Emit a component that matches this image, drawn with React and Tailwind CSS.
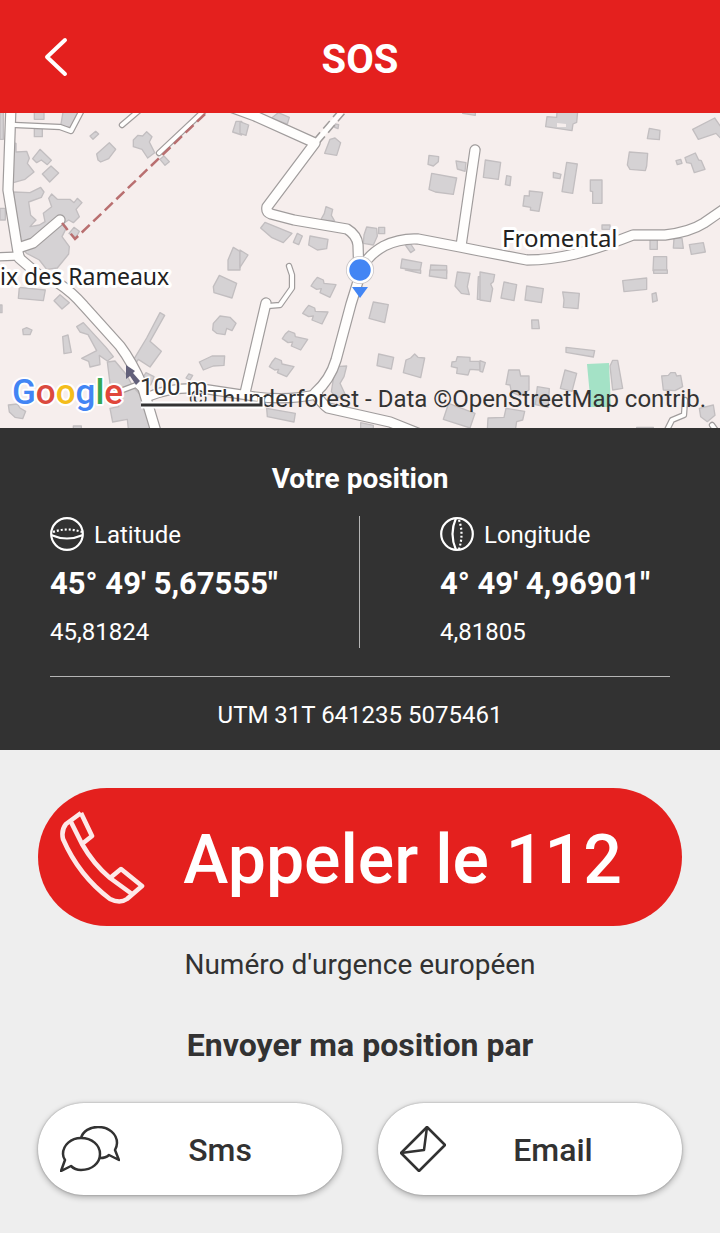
const roads = [
  { w: 9, d: 'M11 105 L8 190 L17 246 L19 258 L40 276 L58 283 Q72 292 84 306 L120 346 Q132 362 142 385 L157 435' },
  { w: 9, d: 'M60 220 L33 243 L18 248' },
  { w: 7, d: 'M-5 257 L20 256' },
  { w: 4, d: 'M15 125 L60 127 L71 131 L82 110' },
  { w: 4, d: 'M122 125 L142 108' },
  { w: 4, d: 'M159 153 L207 108' },
  { w: 9, d: 'M225 105 L255 116 L315 143 L267 207 Q266 212 271 214 L294 220 L347 229 Q357 235 358 245 L359 275' },
  { w: 9, d: 'M360 272 Q366 256 384 246 Q400 238 418 239 L460 247 L480 251 L527 260 Q550 260 575 254 Q600 248 633 235 L665 235 Q690 232 704 223 L730 205' },
  { w: 9, d: 'M475 150 L461 246' },
  { w: 9, d: 'M360 275 L351 304 L336 360 Q330 380 315 393 Q322 404 328 408 L390 422 L425 436' },
  { w: 9, d: 'M266 303 L245 393' },
  { w: 4, d: 'M268 306 L280 305 L292 288 L292 275 L289 266' },
  { w: 8, d: 'M150 396 Q175 386 205 389 L245 395 Q285 402 318 394' },
  { w: 4, d: 'M115 393 L136 385 L150 398' },
  { w: 4, d: 'M685 400 L684 415 L672 420 L666 432' },
  { w: 4, d: 'M712 425 L720 436' },
];

// building outlines, drawn per tile at three times the map scale
const tiles = [
  { x: 0, y: 110, d: [
    'M0 0H10V88H0Z', 'M103 0H132V28H103Z', 'M103 55H127V80H103Z', 'M190 0H234V22L210 52L182 48Z',
    'M270 78L287 64L296 72L279 88Z', 'M290 132L328 98L347 118L326 146L302 156L294 150Z',
    'M400 90L414 76L428 78L440 65L456 80L448 96L464 128L443 144L426 118L400 110Z',
    'M480 148L492 138L508 155L495 166Z', 'M98 146L120 118L154 151L142 164L124 150L110 158Z',
    'M127 192L153 168L176 189L149 216Z', 'M48 100V126L80 124L88 145L82 160L102 186L75 208L40 218V98Z',
    'M40 246L90 248L122 232L132 246L124 262L86 276L92 316L108 330L90 350L118 345L135 335L130 310L155 290L146 265L155 252L172 268L210 268L222 278L232 265L246 278L228 298L238 320L220 338L206 330L190 340L200 352L186 380L208 410L206 432L172 474L140 478L118 450L80 430L68 420L60 380Z',
    'M207 370L222 352L238 364L228 382Z', 'M0 295H16V330H0Z', 'M684 450L700 412L720 424V480H684Z', 'M708 34H725V75L698 66Z',
  ] },
  { x: 240, y: 110, d: [
    'M0 35L26 45L18 76L0 70Z', 'M95 24L115 8L148 22L142 42Z', 'M254 130L270 88L285 84L302 98L290 136Z',
    'M285 42L296 44L294 56L284 52Z', 'M567 136L596 140L595 155L580 168L564 163Z', 'M648 153L678 158L675 184L652 177Z',
    'M575 190L650 204L640 253L586 246L567 238Z', 'M242 330L253 310L258 290L278 298L274 316L284 333Z',
    'M62 354L75 337L156 370L130 398L94 382Z', 'M172 370L187 378L176 404L160 397Z',
    'M210 378L264 388L260 416L232 420L206 405Z', 'M372 375L380 351L410 355L412 378L400 405L370 400Z',
    'M416 352H434V371H416Z', 'M496 405L512 402L524 420L512 428Z', 'M486 447L545 458L540 483L482 474Z',
    'M572 465L620 467V490H570Z', 'M668 0H706V16L668 10Z', 'M0 420L24 435L0 472Z',
  ] },
  { x: 480, y: 110, d: [
    'M197 50L201 20L230 22L231 5H293L290 37L279 42L276 62Z', 'M508 55L540 61L538 89L502 86Z',
    'M638 58L704 24L722 50V85L708 70L655 88Z', 'M448 126L503 130L500 168L496 182L450 178L442 165Z',
    'M615 143L646 129L656 150L664 152L675 178L643 188L633 160L620 158Z', 'M588 152L602 148L606 160L592 164Z',
    'M16 150L62 157L55 208L10 202Z', 'M80 197L93 200L90 227L76 224Z', 'M148 243L188 247L177 304L151 300L152 292L129 288L133 257L148 258Z',
    'M220 187L243 193L240 206L220 203Z', 'M260 157L292 162L278 250L246 245Z', 'M331 210H366V280H338V245L331 243Z',
    'M366 345H390V358H366Z', 'M510 388H532V418H510Z', 'M582 385H606L610 415L580 414Z', 'M628 404L670 398L676 426L634 433Z',
    'M521 440H560V482H519Z',
  ] },
  { x: 0, y: 270, d: [
    'M58 52L136 60L130 92L55 85Z', 'M162 92L180 74L208 98L186 117Z', 'M68 178L80 173L96 180L90 194L70 194Z',
    'M188 200L204 195L214 247L192 251Z', 'M230 170L250 158L318 232L340 260L322 273L298 256L300 284L270 291L266 274L245 265L290 242L264 194L240 186Z',
    'M405 262L440 204L480 128L494 136L450 214L484 244L450 291L415 268L400 290L390 286Z',
    'M322 276L345 273L380 315L400 352L438 392L456 476H385L382 448L338 456L330 415L356 410L350 374L330 340Z',
    'M424 330L438 308L462 320L452 345Z', 'M25 405L52 402L60 414L77 424L68 446L45 442L28 426Z',
    'M658 16L710 40L696 84L642 68L640 50Z', 'M640 160L660 138L690 142L708 160L696 182L680 175L675 194L650 190L638 180Z',
    'M598 276L636 258L674 258L672 286L640 288L610 300Z', 'M566 312L578 316L570 330L558 324Z', 'M0 105H6V128H0Z', 'M220 468H244V480H220Z',
  ] },
  { x: 240, y: 270, d: [
    'M222 34L232 22L250 30L252 40L288 44L270 82L240 68L244 56L230 58L213 48Z',
    'M198 116L206 106L224 114L226 124L264 126L246 162L216 150L220 138L206 140L188 130Z',
    'M136 192L146 183L164 190L166 200L203 208L182 240L154 228L158 216L144 218L127 206Z',
    'M96 276L106 264L124 272L126 282L162 290L140 320L112 308L116 298L104 300L88 290Z',
    'M400 96L445 104L434 158L387 145Z', 'M416 252L461 262L454 297L411 287Z',
    'M498 270L512 264L524 252L534 262L554 264L542 323L490 308Z',
    'M636 276L648 274L652 260L690 262L690 274H718L720 300L690 298L684 315L650 310L652 294L634 290Z',
    'M286 290L320 288L312 320L300 340L315 372L290 385L274 365Z', 'M80 415L166 430L162 456L82 440Z',
    'M626 400L705 430L690 474L610 448Z', 'M362 458L400 466V480H362Z', 'M496 0H542V10L498 0Z', 'M570 0H620V26L568 18Z',
    'M652 6L690 10L682 50L688 74L664 70L645 48Z', 'M715 20H722V88H712Z',
  ] },
  { x: 480, y: 270, d: [
    'M0 6L44 14L40 35L32 42L38 56L31 95L0 90Z', 'M72 36L110 44L102 92L63 84Z', 'M140 48L190 56L184 98L135 90Z',
    'M248 66L298 70L294 116L250 112L252 90Z', 'M428 32L500 24V58L432 65Z', 'M516 72L528 68L532 92L518 96Z',
    'M155 150H175L178 176H156Z', 'M258 232L344 242L340 261L258 247Z', 'M0 272L16 278L8 306L0 304Z',
    'M255 300L290 310L276 364L241 355Z', 'M390 288L398 271H413L428 355L398 360Z',
    'M86 300H118L122 318H147V360L120 378L94 366L90 345L78 343Z', 'M172 350L208 356L204 412L166 404Z',
    'M545 318L565 316L572 308H586L590 318L602 316L608 350L585 362L550 360Z', 'M658 415L700 405L705 436L682 455L662 440Z',
    'M78 415L134 424L128 450L110 455L106 480H22L24 444L72 442Z', 'M521 0H562V10H521Z', 'M470 472H520V480H470Z',
  ] },
];

const google = [['G', '#4285f4'], ['o', '#db4a3f'], ['o', '#f4bd1b'], ['g', '#4285f4'], ['l', '#34a853'], ['e', '#e0463a']];

function Map() {
  return (
    <svg className="block w-full" viewBox="0 113 720 315" role="img" aria-label="Carte">
      <rect x="0" y="113" width="720" height="315" fill="#f6eeed" />
      {tiles.map(t => (
        <g key={`${t.x}-${t.y}`} transform={`translate(${t.x} ${t.y}) scale(${1 / 3})`}
          fill="#d5d2d4" stroke="#c2bec0" strokeWidth="4" strokeLinejoin="round">
          {t.d.map(d => <path key={d} d={d} />)}
        </g>
      ))}
      <path d="M587 364 L609 363 L611 407 H591Z" fill="#a4e2c6" />
      <path d="M557 123 L566 124 V127 H557Z" fill="#f6eeed" />

      {/* Roads: grey casing below, white on top */}
      <g fill="none" stroke="#a09c9c" strokeLinecap="round" strokeLinejoin="round">
        {roads.map(r => <path key={r.d} d={r.d} strokeWidth={r.w + 2.4} />)}
        <path d="M316 142 L345 108" strokeWidth="8" strokeDasharray="10 5" strokeLinecap="butt" />
      </g>
      <g fill="none" stroke="#fffefd" strokeLinecap="round" strokeLinejoin="round">
        {roads.map(r => <path key={r.d} d={r.d} strokeWidth={r.w} />)}
        <path d="M316 142 L345 108" strokeWidth="5" />
      </g>
      <path d="M205 114 L75 239 L62 223" fill="none" stroke="#b96f70" strokeWidth="2.5" strokeDasharray="11 5" />
      <path d="M126 365 L135 371 L133 373 L140 381 L136 385 L130 376 L126 379Z" fill="#62607a" />

      <g fontFamily='"Noto Sans", sans-serif' fill="#222" stroke="#fff" strokeWidth="6"
        strokeLinejoin="round" paintOrder="stroke">
        <text x="502" y="247" fontSize="24">Fromental</text>
        <text x="0" y="285" fontSize="23">ix des Rameaux</text>
      </g>

      {/* Current position */}
      <path d="M352 287 H368 L360 298Z" fill="#4285f4" />
      <circle cx="360" cy="270" r="14" fill="#c9c5c6" />
      <circle cx="360" cy="270" r="12" fill="#4285f4" stroke="#fff" strokeWidth="2.5" />

      <text x="706" y="407" textAnchor="end" fontFamily="Roboto, sans-serif" fontSize="24" fill="#333">
        ©Thunderforest - Data ©OpenStreetMap contrib.
      </text>

      {/* Scale */}
      <path d="M141 405 H261 V397" fill="none" stroke="#fff" strokeWidth="7" />
      <path d="M141 405 H261 V397" fill="none" stroke="#333" strokeWidth="3" />
      <text x="140" y="395" fontFamily="Roboto, sans-serif" fontSize="24" fill="#333" stroke="#fff"
        strokeWidth="3" paintOrder="stroke">100 m</text>

      <text x="12" y="404" fontFamily="Roboto, sans-serif" fontSize="35" fontWeight="500" stroke="#fff"
        strokeWidth="4" strokeLinejoin="round" paintOrder="stroke">
        {google.map(([c, fill], i) => <tspan key={i} fill={fill}>{c}</tspan>)}
      </text>
    </svg>
  );
}

function LatitudeIcon() {
  return (
    <svg className="size-[34px] shrink-0" viewBox="0 0 34 34" fill="none" stroke="currentColor" strokeWidth="2.2" aria-hidden="true">
      <circle cx="17" cy="17" r="15.8" />
      <path d="M1 18 Q17 25 33 18" />
      <path d="M3 15 Q17 10 32 15" strokeDasharray="2 2" />
    </svg>
  );
}

function LongitudeIcon() {
  return (
    <svg className="size-[34px] shrink-0" viewBox="0 0 34 34" fill="none" stroke="currentColor" strokeWidth="2.2" aria-hidden="true">
      <circle cx="17" cy="17" r="15.8" />
      <path d="M16 1 Q9 17 16 33" />
      <path d="M19 3 Q24 17 19 32" strokeDasharray="2 2" />
    </svg>
  );
}

function PhoneIcon() {
  return (
    <svg className="h-[94px] w-[85px] shrink-0" viewBox="0 0 85 94" fill="none" stroke="#fde9e8" strokeWidth="4.6"
      strokeLinejoin="round" aria-hidden="true">
      <path d="M21 3 L32 26 L22 34 M50 68 L61 59 L82 76 L67 89 Q60 94 50 89 C30 74 13 52 3 29 Q1 20 6 14 L21 3" />
      <path d="M11 12 L22 34 C30 48 38 58 50 68 L72 84" />
    </svg>
  );
}

function ChatIcon() {
  return (
    <svg className="h-[46px] w-[60px] shrink-0" viewBox="0 0 60 46" fill="none" stroke="currentColor" strokeWidth="2.5"
      strokeLinejoin="round" aria-hidden="true">
      <path d="M21 12 C23 5 30 1 38 1 C49 1 57 8 57 17 C57 20 56 22 55 24 L59 34 L49 29 Q46 32 40 32" />
      <path d="M21 12 C32 12 40 19 40 28 C40 37 32 44 21 44 Q15 44 11 40 L1 45 L5 34 Q3 31 3 28 C3 19 11 12 21 12Z" />
    </svg>
  );
}

function MailIcon() {
  return (
    <svg className="size-[46px] shrink-0" viewBox="0 0 46 46" fill="none" stroke="currentColor" strokeWidth="2.5"
      strokeLinejoin="round" aria-hidden="true">
      <path d="M27 1 L45 19 L19 45 L1 27 Z" />
      <path d="M27 1 L24 24 L1 27" />
    </svg>
  );
}

function Coordinate({ icon, label, dms, decimal }) {
  return (
    <div>
      <div className="flex items-center gap-[10px] text-2xl leading-[34px]">
        {icon}
        <span className="pt-0.5">{label}</span>
      </div>
      <p className="mt-3 text-[31px] leading-10 font-bold whitespace-nowrap">{dms}</p>
      <p className="mt-3 text-2xl leading-8">{decimal}</p>
    </div>
  );
}

function ShareButton({ icon, label }) {
  return (
    <button type="button"
      className="flex h-[92px] flex-1 items-center rounded-full bg-white px-[22px] text-[#323232] shadow-[0_2px_6px_rgba(0,0,0,0.3),0_0_2px_rgba(0,0,0,0.3)]">
      {icon}
      <span className="flex-1 pt-0.5 text-center text-[32px] font-medium">{label}</span>
    </button>
  );
}

export default function App() {
  return (
    <div className="flex min-h-screen flex-col bg-[#eeeeee] font-[Roboto,sans-serif] text-[#323232]">
      <header className="grid h-[113px] grid-cols-[72px_1fr_72px] items-center bg-[#e4201e] text-white">
        <button type="button" aria-label="Retour" className="flex justify-end pr-1">
          <svg className="h-10 w-6" viewBox="0 0 24 40" fill="none" stroke="currentColor" strokeWidth="4"
            strokeLinecap="round" strokeLinejoin="round">
            <path d="M21 3 L3 20 L21 37" />
          </svg>
        </button>
        <h1 className="pt-1.5 text-center text-[40px] leading-none font-bold">SOS</h1>
      </header>

      <Map />

      <section className="bg-[#323232] px-[50px] pt-[33px] pb-[17px] text-white">
        <h2 className="text-center text-[28px] leading-9 font-bold">Votre position</h2>
        <div className="mt-[19px] grid grid-cols-2 divide-x divide-[#b5b5b5]">
          <Coordinate icon={<LatitudeIcon />} label="Latitude" dms={`45° 49' 5,67555"`} decimal="45,81824" />
          <div className="pl-20">
            <Coordinate icon={<LongitudeIcon />} label="Longitude" dms={`4° 49' 4,96901"`} decimal="4,81805" />
          </div>
        </div>
        <p className="mt-7 border-t border-[#b5b5b5] pt-5 text-center text-2xl leading-9">UTM 31T 641235 5075461</p>
      </section>

      <main className="px-[38px] pt-[38px] pb-9">
        <button type="button" className="flex h-[138px] w-full items-center rounded-full bg-[#e4201e] px-[22px] text-white">
          <PhoneIcon />
          <span className="flex-1 pt-1.5 text-center text-[68px] leading-none font-medium whitespace-nowrap">Appeler le 112</span>
        </button>
        <p className="mt-[21px] text-center text-[28px] leading-9">Numéro d'urgence européen</p>
        <h2 className="mt-[42px] text-center text-[32px] leading-10 font-bold">Envoyer ma position par</h2>
        <div className="mt-[38px] flex gap-9">
          <ShareButton icon={<ChatIcon />} label="Sms" />
          <ShareButton icon={<MailIcon />} label="Email" />
        </div>
      </main>
    </div>
  );
}
